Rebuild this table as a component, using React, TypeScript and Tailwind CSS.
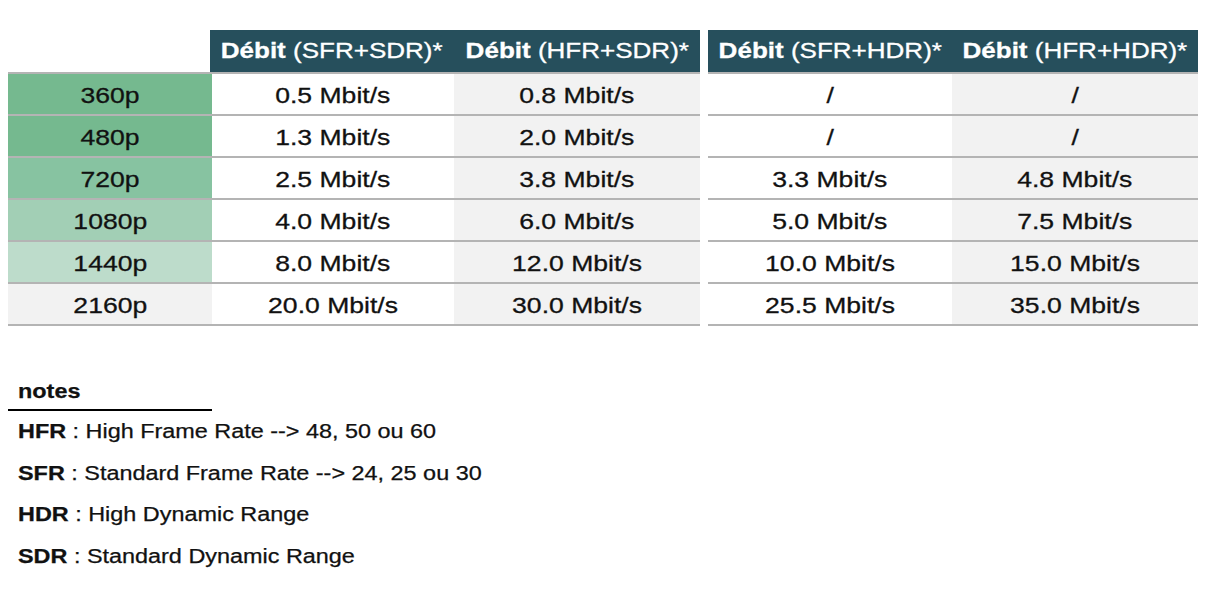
type Row = { label: string; bg: string; values: [string, string, string, string] }

const rows: Row[] = [
  { label: '360p', bg: 'bg-[#75b98f]', values: ['0.5 Mbit/s', '0.8 Mbit/s', '/', '/'] },
  { label: '480p', bg: 'bg-[#75b98f]', values: ['1.3 Mbit/s', '2.0 Mbit/s', '/', '/'] },
  { label: '720p', bg: 'bg-[#87c3a1]', values: ['2.5 Mbit/s', '3.8 Mbit/s', '3.3 Mbit/s', '4.8 Mbit/s'] },
  { label: '1080p', bg: 'bg-[#a2cfb5]', values: ['4.0 Mbit/s', '6.0 Mbit/s', '5.0 Mbit/s', '7.5 Mbit/s'] },
  { label: '1440p', bg: 'bg-[#bddccb]', values: ['8.0 Mbit/s', '12.0 Mbit/s', '10.0 Mbit/s', '15.0 Mbit/s'] },
  { label: '2160p', bg: 'bg-[#f2f2f2]', values: ['20.0 Mbit/s', '30.0 Mbit/s', '25.5 Mbit/s', '35.0 Mbit/s'] },
]

const notes = [
  { abbr: 'HFR', text: ' : High Frame Rate --> 48, 50 ou 60' },
  { abbr: 'SFR', text: ' : Standard Frame Rate --> 24, 25 ou 30' },
  { abbr: 'HDR', text: ' : High Dynamic Range' },
  { abbr: 'SDR', text: ' : Standard Dynamic Range' },
]

function Head({ mode }: { mode: string }) {
  return (
    <div className="h-[42px] flex items-center justify-center bg-[#264f5c] text-white text-[21.5px] whitespace-nowrap">
      <span className="inline-block scale-x-[1.21] [-webkit-text-stroke:0.3px_currentColor]">
        <b>Débit</b> ({mode})*
      </span>
    </div>
  )
}

function Cell({ children, className }: { children: React.ReactNode; className: string }) {
  return (
    <div className={`h-[42px] border-t-2 border-[#b4b4b4] flex items-end justify-center pb-[1px] text-[22.5px] text-[#111] ${className}`}>
      <span className="inline-block scale-x-[1.18] whitespace-nowrap [-webkit-text-stroke:0.3px_currentColor]">{children}</span>
    </div>
  )
}

export default function App() {
  return (
    <div className="min-h-screen bg-white pt-[30px] px-2 font-['Liberation_Sans',Arial,sans-serif]">
      <div className="flex gap-2 items-start">
        <div className="grid grid-cols-[204px_242px_246px] border-b-2 border-[#b4b4b4]">
          <div />
          <div className="-ml-[2px]"><Head mode="SFR+SDR" /></div>
          <Head mode="HFR+SDR" />
          {rows.map(r => (
            <div key={r.label} className="contents">
              <Cell className={r.bg}>{r.label}</Cell>
              <Cell className="bg-white">{r.values[0]}</Cell>
              <Cell className="bg-[#f2f2f2]">{r.values[1]}</Cell>
            </div>
          ))}
        </div>
        <div className="grid grid-cols-[244px_246px] border-b-2 border-[#b4b4b4]">
          <Head mode="SFR+HDR" />
          <Head mode="HFR+HDR" />
          {rows.map(r => (
            <div key={r.label} className="contents">
              <Cell className="bg-white">{r.values[2]}</Cell>
              <Cell className="bg-[#f2f2f2]">{r.values[3]}</Cell>
            </div>
          ))}
        </div>
      </div>

      <div className="mt-[53px] text-[19.5px] text-[#111] [-webkit-text-stroke:0.25px_currentColor]">
        <div className="w-[204px] border-b-2 border-black pl-[10px] pb-[6px] leading-[24px] font-bold">
          <span className="inline-block origin-left scale-x-[1.2]">notes</span>
        </div>
        {notes.map(n => (
          <div key={n.abbr} className="pl-[10px] leading-[41.7px] whitespace-nowrap">
            <span className="inline-block origin-left scale-x-[1.2]">
              <b>{n.abbr}</b>{n.text}
            </span>
          </div>
        ))}
      </div>
    </div>
  )
}
